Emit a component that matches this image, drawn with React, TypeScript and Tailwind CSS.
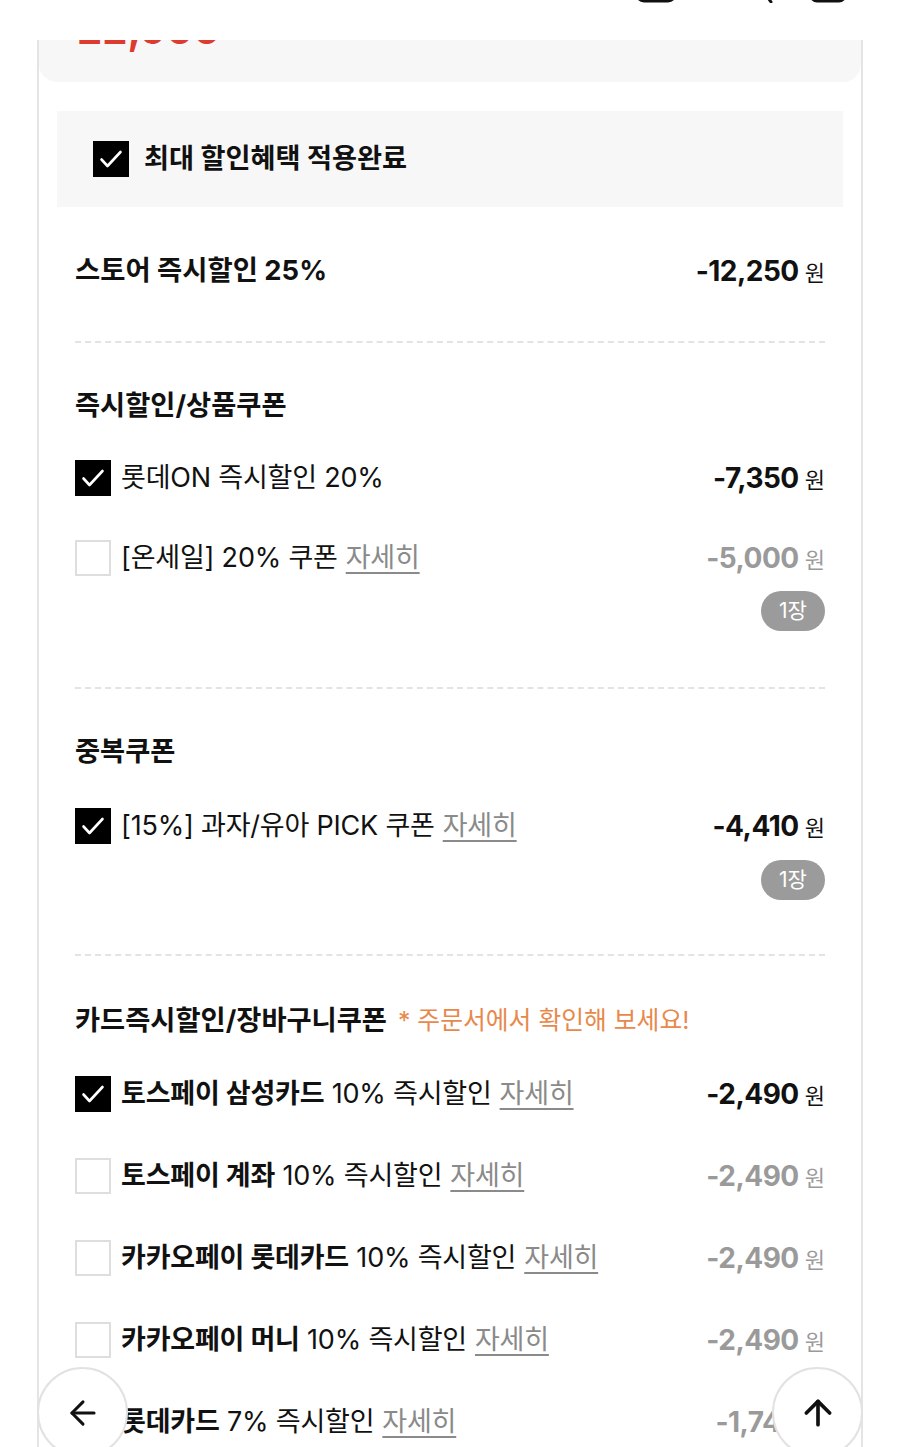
import { ArrowLeft, ArrowUp } from "lucide-react";

const font = "font-['Inter','Noto_Sans_CJK_KR',sans-serif]";

function Check({ on }: { on: boolean }) {
  if (!on) {
    return <div className="w-[36px] h-[36px] shrink-0 border-2 border-[#dedede] bg-white" />;
  }
  return (
    <div className="w-[36px] h-[36px] shrink-0 bg-black flex items-center justify-center">
      <svg width="36" height="36" viewBox="0 0 36 36" fill="none">
        <polyline points="8.5,18.5 14.5,25 27.5,11" stroke="white" strokeWidth="2.6" strokeLinecap="round" strokeLinejoin="round" />
      </svg>
    </div>
  );
}

function Price({ value, muted }: { value: string; muted?: boolean }) {
  return (
    <div className={`flex items-baseline shrink-0 ${muted ? "text-[#9a9a9a]" : "text-[#111]"}`}>
      <span className="text-[28px] font-bold tracking-[-0.5px]">{value}</span>
      <span className="text-[22px] ml-[6px]">원</span>
    </div>
  );
}

function Detail() {
  return <span className="text-[#8a8a8a] underline underline-offset-[5px] decoration-[1.5px] ml-[8px]">자세히</span>;
}

function Badge() {
  return (
    <div className="flex justify-end">
      <span className="w-[64px] h-[40px] rounded-full bg-[#9b9b9b] text-white text-[21px] flex items-center justify-center">1장</span>
    </div>
  );
}

function Row({ on, children, price, className = "" }: { on: boolean; children: React.ReactNode; price: string; className?: string }) {
  return (
    <div className={`h-[40px] flex items-center justify-between ${className}`}>
      <div className="flex items-center gap-[10px] text-[27px] text-[#111] tracking-[-0.2px] whitespace-nowrap">
        <Check on={on} />
        <div>{children}</div>
      </div>
      <Price value={price} muted={!on} />
    </div>
  );
}

function Dash({ className = "" }: { className?: string }) {
  return <div className={`border-t-2 border-dashed border-[#e3e3e3] ${className}`} />;
}

function Title({ children, className = "" }: { children: React.ReactNode; className?: string }) {
  return (
    <div className={`h-[40px] flex items-center text-[27.3px] font-bold text-[#111] whitespace-nowrap ${className}`}>
      {children}
    </div>
  );
}

export default function App() {
  return (
    <div className={`min-h-screen bg-white ${font}`}>
      {/* header, scrolled so only icon bottoms peek out */}
      <div className="h-[40px] bg-white overflow-hidden relative">
        <div className="flex items-end h-[40px] -mt-[37px]">
          <svg className="ml-[28px]" width="30" height="40" viewBox="0 0 30 40" fill="none">
            <path d="M22 6 L8 20 L22 34" stroke="#111" strokeWidth="2.6" strokeLinecap="round" />
          </svg>
          <div className="flex-1" />
          <svg width="44" height="40" viewBox="0 0 44 40" fill="none">
            <rect x="3" y="4" width="38" height="34" rx="7" stroke="#111" strokeWidth="3" />
          </svg>
          <svg className="ml-[62px]" width="36" height="40" viewBox="0 0 36 40" fill="none">
            <circle cx="15" cy="20" r="13" stroke="#111" strokeWidth="3" />
            <path d="M24 29 L31 39" stroke="#111" strokeWidth="3" strokeLinecap="round" />
          </svg>
          <svg className="ml-[32px] mr-[52px]" width="40" height="40" viewBox="0 0 40 40" fill="none">
            <rect x="3" y="4" width="34" height="34" rx="6" stroke="#111" strokeWidth="3" />
          </svg>
        </div>
      </div>

      <div className="mx-[37px] border-x-2 border-[#e4e4e4] pb-[60px]">
        {/* price summary, mostly scrolled off */}
        <div className="h-[42px] bg-[#f7f7f7] rounded-b-[18px] overflow-hidden px-[38px]">
          <div className="-mt-[34px] flex items-end justify-between">
            <span className="text-[40px] font-bold text-[#dd3b2f] leading-[48px]">22,900</span>
          </div>
        </div>

        <div className="px-[18px]">
          <div className="mt-[29px] h-[96px] bg-[#f7f7f7] flex items-center pl-[36px] gap-[15px]">
            <Check on />
            <span className="text-[27.2px] font-bold text-[#111]">최대 할인혜택 적용완료</span>
          </div>

          <div className="px-[18px]">
            <div className="mt-[44px] h-[40px] flex items-center justify-between">
              <span className="text-[27.4px] font-bold text-[#111]">스토어 즉시할인 25%</span>
              <Price value="-12,250" />
            </div>
            <Dash className="mt-[50px]" />

            <Title className="mt-[43px]">즉시할인/상품쿠폰</Title>
            <Row on price="-7,350" className="mt-[32px]">롯데ON 즉시할인 20%</Row>
            <Row on={false} price="-5,000" className="mt-[40px]">
              [온세일] 20% 쿠폰<Detail />
            </Row>
            <div className="mt-[13px]"><Badge /></div>
            <Dash className="mt-[56px]" />

            <Title className="mt-[43px]">중복쿠폰</Title>
            <Row on price="-4,410" className="mt-[34px]">
              [15%] 과자/유아 PICK 쿠폰<Detail />
            </Row>
            <div className="mt-[14px]"><Badge /></div>
            <Dash className="mt-[54px]" />

            <Title className="mt-[45px]">
              카드즉시할인/장바구니쿠폰
              <span className="ml-[11px] text-[24.8px] font-normal text-[#e8894c]">* 주문서에서 확인해 보세요!</span>
            </Title>
            <Row on price="-2,490" className="mt-[33px]">
              <b>토스페이 삼성카드</b> 10% 즉시할인<Detail />
            </Row>
            <Row on={false} price="-2,490" className="mt-[42px]">
              <b>토스페이 계좌</b> 10% 즉시할인<Detail />
            </Row>
            <Row on={false} price="-2,490" className="mt-[42px]">
              <b>카카오페이 롯데카드</b> 10% 즉시할인<Detail />
            </Row>
            <Row on={false} price="-2,490" className="mt-[42px]">
              <b>카카오페이 머니</b> 10% 즉시할인<Detail />
            </Row>
            <Row on={false} price="-1,740" className="mt-[42px]">
              <b>롯데카드</b> 7% 즉시할인<Detail />
            </Row>
          </div>
        </div>
      </div>

      {/* floating buttons */}
      <button className="fixed left-[37px] top-[1367px] w-[91px] h-[91px] rounded-full bg-white border-2 border-[#e2e2e2] flex items-center justify-center">
        <ArrowLeft size={38} strokeWidth={1.9} color="#111" />
      </button>
      <button className="fixed left-[772px] top-[1367px] w-[91px] h-[91px] rounded-full bg-white border-2 border-[#e2e2e2] flex items-center justify-center">
        <ArrowUp size={40} strokeWidth={2.2} color="#111" />
      </button>
    </div>
  );
}
